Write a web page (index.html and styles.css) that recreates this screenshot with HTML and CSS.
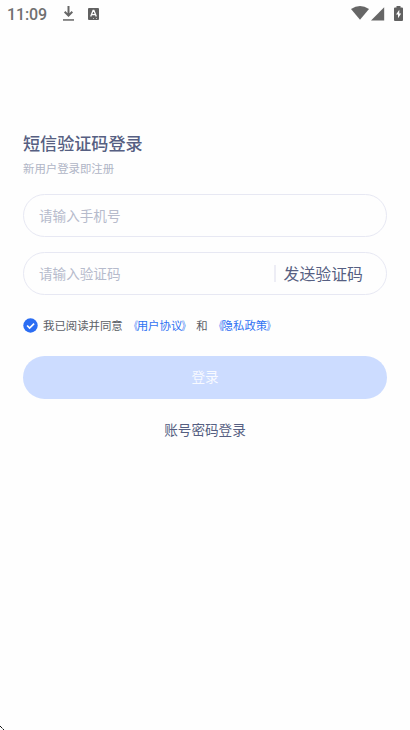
FILE: index.html
```html
<!DOCTYPE html>
<html lang="zh-CN">
<head>
<meta charset="utf-8">
<title>短信验证码登录</title>
<link rel="stylesheet" href="styles.css">
</head>
<body>
<header class="status">
  <span class="clock">11:09</span>
  <svg class="download" width="13" height="16" viewBox="0 0 13 16"><path d="M6.500 0v9M2.700 5.700l3.800 3.900 3.800-3.900" fill="none" stroke="#666" stroke-width="2"/><path d="M1 13.200h11v1.500H1z" fill="#666"/></svg>
  <svg class="badge" width="11" height="12" viewBox="0 0 11 12"><path d="M1 0h9q1 0 1 1v10q0 1-1 1H1q-1 0-1-1V1q0-1 1-1z" fill="#616161"/><path d="M2.700 8.500 5.100 2.400h.8l2.400 6.100M3.700 6.700h3.600" fill="none" stroke="#fff" stroke-width="1.300"/><path d="M5 10h1v1H5zM8 10h1v1H8z" fill="#bbb"/></svg>
  <span class="spacer"></span>
  <svg class="wifi" width="18" height="14" viewBox="0 0 18 14"><path d="M0 3.100Q9-3.100 18 3.100L9 13.800z" fill="#666"/></svg>
  <svg class="signal" width="14" height="14" viewBox="0 0 14 14"><path d="M13.200.3v13.200H0z" fill="#666"/></svg>
  <svg class="battery" width="9" height="15" viewBox="0 0 9 15"><path d="M2.500 0h4v1.500H8q1 0 1 1V14q0 1-1 1H1q-1 0-1-1V2.500q0-1 1-1h1.500z" fill="#616161"/><path d="M5.300 3.700 2 8.500h2v3.800L7.200 7.500H5.300z" fill="#fff"/></svg>
</header>
<main class="login">
  <h1 class="title">短信验证码登录</h1>
  <p class="subtitle">新用户登录即注册</p>
  <div class="field"><span class="hint">请输入手机号</span></div>
  <div class="field"><span class="hint">请输入验证码</span><span class="send">发送验证码</span></div>
  <div class="agree">
    <svg class="check" width="15" height="15" viewBox="0 0 15 15"><circle cx="7.500" cy="7.500" r="7.200" fill="#2b6df3"/><path d="m4.100 7.500 2.500 2.500 4.500-4.400" fill="none" stroke="#fff" stroke-width="1.700"/></svg>
    <span>我已阅读并同意 <a class="link"><span class="open">《</span>用户协议<span class="close">》</span></a> 和 <a class="link"><span class="open">《</span>隐私政策<span class="close">》</span></a></span>
  </div>
  <div class="submit">登录</div>
  <div class="switch">账号密码登录</div>
</main>
<svg class="corner" width="5" height="5" viewBox="0 0 5 5"><path d="M0 1h1v1H0zM1 2h1v1H1zM3 4h1v1H3z" fill="#111"/><path d="M2 3h1v1H2z" fill="#888"/></svg>
</body>
</html>
```
FILE: styles.css
```css
* { box-sizing: border-box; }
body {
  margin: 0;
  height: 730px;
  overflow: hidden;
  background: #fefefe;
  font-family: "Noto Sans CJK SC", sans-serif;
  color: #565f82;
}
svg { display: block; flex: none; }
.status { display: flex; height: 28px; padding: 0 7px; align-items: flex-start; }
.clock { width: 55px; font: 500 16px/29px Roboto, sans-serif; letter-spacing: -.1px; color: #707070; }
.download { margin-top: 6px; }
.badge { margin: 8px 0 0 13px; }
.spacer { flex: 1; }
.wifi { margin: 6px 2px 0 0; }
.signal { margin: 7px 9px 0 0; }
.battery { margin: 6px 0 0; }
.login { padding: 102px 23px 0; }
.title { margin: 0; font-size: 17.1px; line-height: 25px; font-weight: 500; }
.subtitle { margin: 4px 0 17px; font-size: 11.4px; line-height: 18px; color: #b0b5c6; }
.field {
  display: flex;
  align-items: center;
  height: 43px;
  margin-bottom: 15px;
  padding: 0 23px 1px 15px;
  border: 1.500px solid #e7e8f3;
  border-radius: 22px;
}
.hint { flex: 1; font-size: 13.6px; color: #b6bbcc; }
.send { padding-left: 8px; border-left: 2px solid #ededf5; font-size: 15.9px; line-height: 17px; }
.agree { display: flex; align-items: center; height: 18px; margin-top: 21px; font-size: 11.4px; line-height: 18px; color: #5b5e66; white-space: nowrap; }
.check { margin-right: 5px; }
.link { color: #3072f3; }
.open, .close { display: inline-block; }
.open { transform: translateX(1.500px) scaleX(.7); transform-origin: right; }
.close { transform: translateX(-.5px) scaleX(.75); transform-origin: left; }
.submit { height: 42.500px; margin-top: 22px; border-radius: 22px; background: #ccdcff; color: #f8faff; font-size: 13.6px; line-height: 41px; text-align: center; }
.switch { margin-top: 20.500px; font-size: 13.6px; line-height: 20px; text-align: center; }
.corner { position: absolute; left: 0; bottom: 0; }
```
